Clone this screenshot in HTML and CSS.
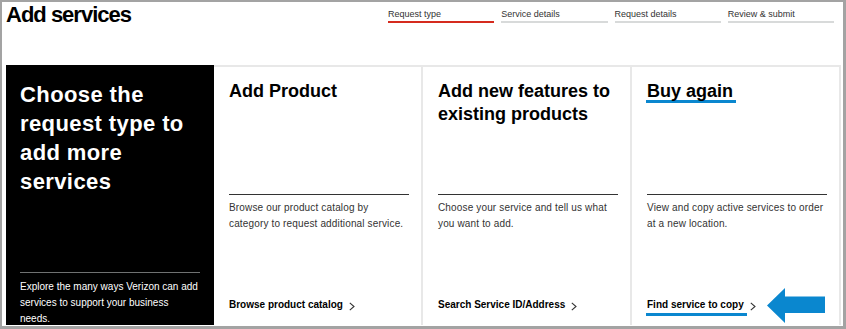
FILE: index.html
```html
<!DOCTYPE html>
<html>
  <head>
    <title>Add services</title>
    <link rel="stylesheet" href="styles.css">
  </head>
  <body>
    <div class="frame">
      <div class="header">
        <h1 class="page-title">Add services</h1>
        <div class="steps">
          <div class="step active">
            <span class="step-label">Request type</span>
            <div class="step-bar"></div>
          </div>
          <div class="step">
            <span class="step-label">Service details</span>
            <div class="step-bar"></div>
          </div>
          <div class="step">
            <span class="step-label">Request details</span>
            <div class="step-bar"></div>
          </div>
          <div class="step">
            <span class="step-label">Review &amp; submit</span>
            <div class="step-bar"></div>
          </div>
        </div>
      </div>

      <div class="cards">
        <div class="intro">
          <h2 class="intro-title">Choose the request type to add more services</h2>
          <p class="intro-text">Explore the many ways Verizon can add services to support your business needs.</p>
        </div>

        <div class="card">
          <h2 class="card-title">Add Product</h2>
          <p class="card-text">Browse our product catalog by category to request additional service.</p>
          <a class="card-link" href="#">
            <span class="link-text">Browse product catalog</span>
            <svg class="chevron" width="6" height="9" viewBox="0 0 6 9"><path d="M0.8 0.8 L5 4.5 L0.8 8.2" fill="none" stroke="#333" stroke-width="1.1"/></svg>
          </a>
        </div>

        <div class="card">
          <h2 class="card-title">Add new features to existing products</h2>
          <p class="card-text">Choose your service and tell us what you want to add.</p>
          <a class="card-link" href="#">
            <span class="link-text">Search Service ID/Address</span>
            <svg class="chevron" width="6" height="9" viewBox="0 0 6 9"><path d="M0.8 0.8 L5 4.5 L0.8 8.2" fill="none" stroke="#333" stroke-width="1.1"/></svg>
          </a>
        </div>

        <div class="card highlight">
          <h2 class="card-title"><span class="marked">Buy again</span></h2>
          <p class="card-text">View and copy active services to order at a new location.</p>
          <a class="card-link" href="#">
            <span class="link-text marked-link">Find service to copy</span>
            <svg class="chevron" width="6" height="9" viewBox="0 0 6 9"><path d="M0.8 0.8 L5 4.5 L0.8 8.2" fill="none" stroke="#333" stroke-width="1.1"/></svg>
          </a>
          <svg class="pointer" width="59" height="35" viewBox="0 0 59 35"><path d="M0 17.5 L18 0 L18 8.5 L58 8.5 L58 25 L18 25 L18 35 Z" fill="#0a87cf"/></svg>
        </div>
      </div>
    </div>
  </body>
</html>
```

FILE: styles.css
```css
body {
  font-family: "Liberation Sans", Arial, sans-serif;
  margin: 0;
  padding: 0;
  background-color: white;
}

.frame {
  width: 846px;
  height: 329px;
  box-sizing: border-box;
  border-style: solid;
  border-color: #a3a3a3;
  border-width: 2px 3px 3px 2px;
  padding: 0 2px 1px 4px;
  display: flex;
  flex-direction: column;
  overflow: hidden;
}

.header {
  height: 63px;
  flex-shrink: 0;
  display: flex;
}

.page-title {
  margin: 0;
  font-size: 22px;
  line-height: 26px;
  letter-spacing: -1px;
  color: #000;
}

.steps {
  margin-left: auto;
  margin-right: 7px;
  width: 446px;
  padding-top: 6px;
  display: grid;
  grid-template-columns: repeat(4, 1fr);
  column-gap: 7px;
  align-self: flex-start;
}

.step-label {
  display: block;
  font-size: 9px;
  line-height: 12px;
  color: #333;
  white-space: nowrap;
}

.step-bar {
  margin-top: 1px;
  height: 2px;
  background-color: #d8dada;
}

.step.active .step-bar {
  background-color: #d52b1e;
}

.cards {
  flex: 1;
  display: flex;
  min-height: 0;
}

.intro {
  width: 208px;
  flex-shrink: 0;
  box-sizing: border-box;
  background-color: #000;
  color: white;
  padding: 15px 14px 0 14px;
}

.intro-title {
  margin: 0;
  height: 192px;
  font-size: 22px;
  line-height: 29px;
  letter-spacing: 0.4px;
  border-bottom: 1px solid #6f7171;
}

.intro-text {
  margin: 5.5px 0 0 0;
  font-size: 10px;
  line-height: 16px;
}

.card {
  flex: 1;
  position: relative;
  box-sizing: border-box;
  border-top: 2px solid #e8e8e8;
  border-right: 2px solid #e8e8e8;
  padding: 13px 12px 9px 15px;
  display: flex;
  flex-direction: column;
}

.card-title {
  margin: 0;
  height: 115px;
  flex-shrink: 0;
  font-size: 18px;
  line-height: 23px;
  color: #000;
  border-bottom: 1px solid #333;
  box-sizing: border-box;
}

.card-text {
  margin: 5px 0 0 0;
  font-size: 10px;
  line-height: 16px;
  letter-spacing: 0.15px;
  color: #333;
}

.card-link {
  margin-top: auto;
  display: flex;
  align-items: center;
  gap: 6px;
  color: #000;
  text-decoration: none;
}

.link-text {
  display: inline-block;
  font-size: 10px;
  font-weight: bold;
  line-height: 16px;
  border-bottom: 3px solid transparent;
}

.marked {
  display: inline-block;
  line-height: 18px;
  padding: 0 3px 0 1px;
  margin-left: -1px;
  border-bottom: 3px solid #0a87cf;
}

.link-text.marked-link {
  border-bottom-color: #0a87cf;
  padding-right: 3px;
  margin-left: -1px;
  padding-left: 1px;
}

.card.highlight .card-link {
  gap: 3px;
}

.pointer {
  position: absolute;
  left: 135px;
  top: 221px;
}
```
